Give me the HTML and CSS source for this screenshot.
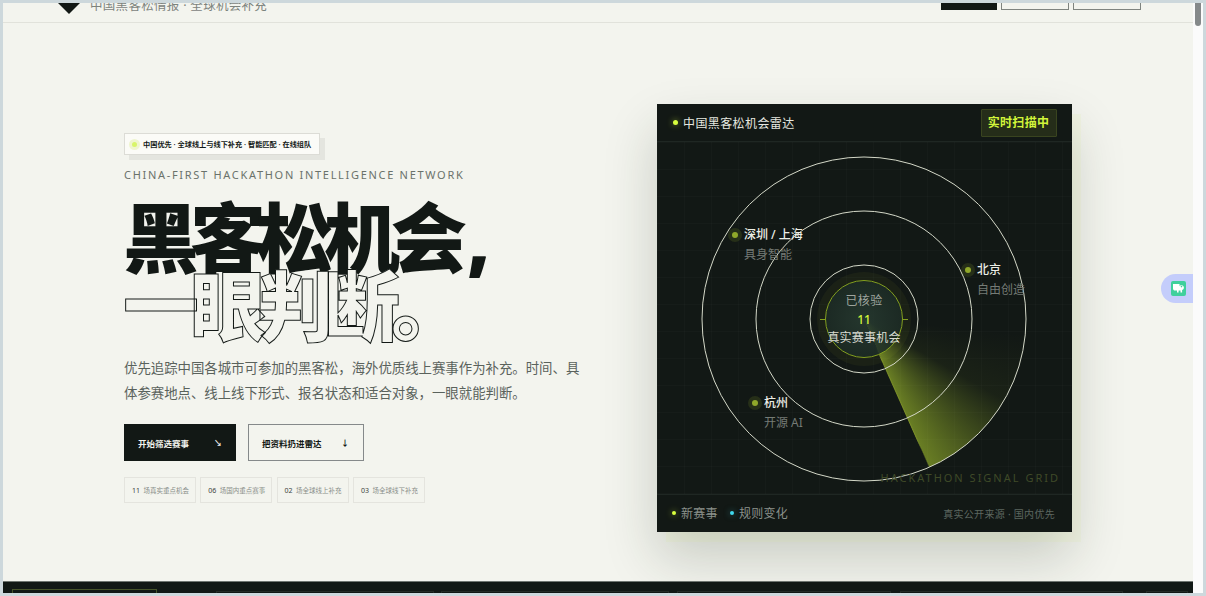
FILE: index.html
```html
<!DOCTYPE html>
<html lang="zh-CN">
<head>
    <meta charset="UTF-8">
    <meta name="viewport" content="width=device-width, initial-scale=1.0">
    <title>中国黑客松情报</title>
    <link rel="stylesheet" href="styles.css">
</head>
<body>
    <div class="window">
        <div class="page">
            <header class="topbar">
                <svg class="logo" viewBox="0 0 44 44" width="44" height="44">
                    <polygon points="22,0 44,22 22,44 0,22" fill="#121815"/>
                    <circle cx="22" cy="22" r="6" fill="#5f7a1c"/>
                </svg>
                <p class="brand-sub">中国黑客松情报 · 全球机会补充</p>
                <nav class="top-actions">
                    <a class="top-btn top-btn-dark"></a>
                    <a class="top-btn top-btn-wide"></a>
                    <a class="top-btn top-btn-wide"></a>
                </nav>
            </header>

            <main class="hero">
                <section class="intro">
                    <div class="tag"><i class="tag-dot"></i>中国优先 · 全球线上与线下补充 · 智能匹配 · 在线组队</div>
                    <p class="eyebrow">CHINA-FIRST HACKATHON INTELLIGENCE NETWORK</p>
                    <h1 class="headline">
                        <span class="line-solid">黑客松机会<i class="comma">,</i></span>
                        <span class="line-outline">一眼判断。</span>
                    </h1>
                    <p class="lead">优先追踪中国各城市可参加的黑客松，海外优质线上赛事作为补充。时间、具体参赛地点、线上线下形式、报名状态和适合对象，一眼就能判断。</p>
                    <div class="cta-row">
                        <a class="cta cta-dark"><span>开始筛选赛事</span><span class="cta-arrow">↘</span></a>
                        <a class="cta cta-light"><span>把资料扔进雷达</span><span class="cta-arrow">↓</span></a>
                    </div>
                    <ul class="stats">
                        <li><b>11</b>场真实重点机会</li>
                        <li><b>06</b>场国内重点赛事</li>
                        <li><b>02</b>场全球线上补充</li>
                        <li><b>03</b>场全球线下补充</li>
                    </ul>
                </section>

                <section class="panel">
                    <div class="panel-head">
                        <div class="panel-title"><i class="dot dot-lime"></i>中国黑客松机会雷达</div>
                        <div class="panel-badge">实时扫描中</div>
                    </div>
                    <div class="radar">
                        <div class="sweep"></div>
                        <div class="sweep-line"></div>
                        <div class="ring ring-outer"></div>
                        <div class="ring ring-mid"></div>
                        <div class="ring ring-inner"></div>
                        <div class="core">
                            <i class="tick tick-left"></i>
                            <i class="tick tick-right"></i>
                            <span class="core-label">已核验</span>
                            <span class="core-num">11</span>
                            <span class="core-text">真实赛事机会</span>
                        </div>
                        <div class="pin pin-sz"><i class="pin-dot"></i><div><b>深圳 / 上海</b><span>具身智能</span></div></div>
                        <div class="pin pin-bj"><i class="pin-dot"></i><div><b>北京</b><span>自由创造</span></div></div>
                        <div class="pin pin-hz"><i class="pin-dot"></i><div><b>杭州</b><span>开源 AI</span></div></div>
                        <div class="watermark">HACKATHON SIGNAL GRID</div>
                    </div>
                    <div class="panel-foot">
                        <div class="legend">
                            <span><i class="dot dot-small dot-lime"></i>新赛事</span>
                            <span><i class="dot dot-small dot-cyan"></i>规则变化</span>
                        </div>
                        <div class="source">真实公开来源 · 国内优先</div>
                    </div>
                </section>
            </main>

            <section class="ticker">
                <div class="ticker-box ticker-first"></div>
                <div class="ticker-box ticker-a"></div>
                <div class="ticker-box ticker-b"></div>
                <div class="ticker-box ticker-c"></div>
                <div class="ticker-box ticker-d"></div>
                <div class="ticker-box ticker-e"></div>
            </section>

            <div class="float-widget">
                <svg viewBox="0 0 15 15" width="15" height="15">
                    <rect width="15" height="15" rx="2" fill="#3fd09c"/>
                    <path d="M2 3h6.500v2.200c.6-1.300 3-1.500 4 0 .9 1.400.3 3.600-1.400 3.800v2.600H9.500v-2H7.600v2H6v-2H4C2.800 9.600 2 8.600 2 7.400z" fill="#fff"/>
                    <circle cx="10.500" cy="5.600" r=".8" fill="#3fd09c"/>
                </svg>
            </div>
        </div>
        <div class="scrollbar"><div class="scroll-thumb"></div></div>
    </div>
</body>
</html>
```

FILE: styles.css
```css
* {
    margin: 0;
    padding: 0;
    box-sizing: border-box;
}

html,
body {
    height: 100%;
    overflow: hidden;
}

body {
    background-color: #cdd8dc;
    padding: 3px;
    font-family: "Noto Sans", "Noto Sans CJK SC", sans-serif;
    color: #121815;
}

.window {
    display: flex;
    height: 100%;
}

.page {
    position: relative;
    flex: 1;
    display: flex;
    flex-direction: column;
    overflow: hidden;
    background-color: #f3f4ee;
}

.scrollbar {
    width: 10px;
    padding: 0 2px;
    background-color: #fbfbfb;
}

.scroll-thumb {
    height: 23px;
    border-radius: 0 0 3px 3px;
    background-color: #85898a;
}

/* top bar, page is scrolled a little so only its bottom shows */
.topbar {
    flex: none;
    display: flex;
    align-items: center;
    height: 61px;
    margin-top: -41px;
    padding: 0 52px 0 44px;
    border-bottom: 1px solid #e1e2db;
}

.logo {
    flex: none;
}

.brand-sub {
    align-self: flex-end;
    margin-left: -1px;
    padding-bottom: 9px;
    font-size: 12.500px;
    line-height: 14px;
    letter-spacing: 0.3px;
    color: #7d837d;
}

.top-actions {
    display: flex;
    gap: 4px;
    margin-left: auto;
}

.top-btn {
    display: block;
    width: 56px;
    height: 36px;
    border: 1px solid #7f847f;
}

.top-btn-dark {
    background-color: #121815;
    border-color: #121815;
}

.top-btn-wide {
    width: 68px;
}

/* hero */
.hero {
    flex: 1;
    display: grid;
    grid-template-columns: 1fr 415px;
    align-items: center;
    padding: 81px 121px 49px;
    min-height: 0;
}

.intro {
    display: flex;
    flex-direction: column;
    align-items: flex-start;
}

.tag {
    display: flex;
    align-items: center;
    height: 22px;
    padding: 0 8px 0 6px;
    border: 1px solid #dcdcd6;
    background-color: #fbfbf7;
    box-shadow: 5px 5px 0 #e4e5df;
    font-size: 7.200px;
    font-weight: 700;
    white-space: nowrap;
}

.tag-dot {
    width: 5px;
    height: 5px;
    margin: 0 6px 0 1px;
    border-radius: 50%;
    background-color: #d8f56a;
    box-shadow: 0 0 0 3px #eff5cf;
}

.eyebrow {
    margin-top: 12px;
    font-size: 11px;
    line-height: 16px;
    letter-spacing: 1.700px;
    color: #6a726b;
    white-space: nowrap;
}

.headline {
    margin-top: 21px;
    margin-left: -1px;
    font-size: 76px;
    font-weight: 900;
    line-height: 68px;
    letter-spacing: -9px;
    white-space: nowrap;
}

.headline span {
    display: block;
}

.line-solid {
    color: #121815;
}

.comma {
    margin-left: 9px;
    font-style: normal;
}

.line-outline {
    color: #f3f4ee;
    -webkit-text-stroke: 1px #121815;
}

.lead {
    width: 460px;
    margin-top: 16px;
    font-size: 13.400px;
    line-height: 25px;
    color: #5a625c;
}

.cta-row {
    display: flex;
    gap: 12px;
    margin-top: 18px;
}

.cta {
    display: flex;
    align-items: center;
    justify-content: space-between;
    height: 37px;
    padding: 0 14px;
    font-size: 8.500px;
    font-weight: 700;
}

.cta-dark {
    width: 112px;
    background-color: #121815;
    color: #f3f4ee;
}

.cta-light {
    width: 116px;
    padding-left: 13px;
    border: 1px solid #85898a;
}

.cta-arrow {
    font-size: 8px;
    font-weight: 700;
}

.stats {
    display: flex;
    gap: 4.300px;
    margin-top: 16px;
    list-style: none;
}

.stats li {
    display: flex;
    align-items: center;
    width: 72px;
    height: 26px;
    padding-left: 7px;
    border: 1px solid #e4e4de;
    font-size: 6.500px;
    color: #8a8f8a;
    white-space: nowrap;
}

.stats b {
    margin-right: 3.500px;
    font-size: 7px;
    font-weight: 400;
    color: #3b423d;
}

/* radar card */
.panel {
    display: flex;
    flex-direction: column;
    height: 428px;
    background-color: #121815;
    box-shadow: 9px 10px 0 rgba(215, 240, 130, 0.1), 0 26px 50px rgba(30, 45, 25, 0.2);
}

.panel-head {
    flex: none;
    display: flex;
    align-items: center;
    justify-content: space-between;
    height: 38px;
    padding: 0 15px 0 16px;
    border-bottom: 1px solid #1f2723;
}

.panel-title {
    display: flex;
    align-items: center;
    font-size: 12px;
    letter-spacing: 0.4px;
    color: #e6e8e0;
}

.dot {
    display: inline-block;
    width: 5px;
    height: 5px;
    margin-right: 6px;
    border-radius: 50%;
}

.panel-title .dot {
    margin-right: 5px;
}

.dot-small {
    width: 4px;
    height: 4px;
    margin-right: 5px;
}

.dot-lime {
    background-color: #d8ff3e;
    box-shadow: 0 0 6px rgba(216, 255, 62, 0.6);
}

.dot-cyan {
    background-color: #3fd8ee;
    box-shadow: 0 0 6px rgba(63, 216, 238, 0.5);
}

.panel-badge {
    width: 76px;
    height: 28px;
    padding-right: 1px;
    border: 1px solid #39441f;
    border-radius: 1px;
    background-color: #252d19;
    font-size: 12px;
    font-weight: 700;
    line-height: 26px;
    text-align: center;
    letter-spacing: 0.3px;
    color: #d2f53a;
}

.radar {
    position: relative;
    flex: 1;
    overflow: hidden;
    background-image:
        linear-gradient(rgba(255, 255, 255, 0.014) 1px, transparent 1px),
        linear-gradient(90deg, rgba(255, 255, 255, 0.014) 1px, transparent 1px);
    background-size: 27px 27px;
}

.ring,
.sweep,
.core {
    position: absolute;
    top: 177px;
    left: 207px;
    border-radius: 50%;
    transform: translate(-50%, -50%);
}

.ring {
    border: 1px solid #d4d8c8;
}

.ring-outer {
    width: 325px;
    height: 325px;
}

.ring-mid {
    width: 217px;
    height: 217px;
}

.ring-inner {
    width: 109px;
    height: 109px;
}

.sweep {
    width: 324px;
    height: 324px;
    background: conic-gradient(from 95deg, rgba(190, 225, 50, 0) 0deg, rgba(190, 225, 50, 0.05) 25deg, rgba(190, 225, 50, 0.5) 61deg, transparent 61.500deg);
}

.sweep-line {
    position: absolute;
    top: 177px;
    left: 206px;
    width: 1px;
    height: 143px;
    background: linear-gradient(rgba(125, 145, 40, 0) 20%, #7d9128 30%, #7d9128 92%, rgba(125, 145, 40, 0));
    transform-origin: top center;
    transform: rotate(-24deg);
}

.core {
    display: flex;
    flex-direction: column;
    align-items: center;
    justify-content: center;
    width: 78px;
    height: 78px;
    border: 1px solid #84a01f;
    background: radial-gradient(circle, rgba(40, 60, 50, 0.85), rgba(25, 38, 33, 0.85));
    box-shadow: 0 0 0 8px rgba(190, 225, 50, 0.05);
}

.tick {
    position: absolute;
    top: 50%;
    width: 5px;
    height: 1px;
    background-color: #84a01f;
}

.tick-left {
    left: -6px;
}

.tick-right {
    right: -6px;
}

.core-label {
    font-size: 12px;
    line-height: 20px;
    letter-spacing: 0.3px;
    color: #9fa59e;
    white-space: nowrap;
}

.core-num {
    font-size: 12px;
    line-height: 17px;
    font-weight: 500;
    color: #d2f53a;
}

.core-text {
    font-size: 12px;
    line-height: 20px;
    letter-spacing: 0.2px;
    color: #d9dcd2;
    white-space: nowrap;
}

.pin {
    position: absolute;
    display: flex;
    gap: 6px;
    align-items: flex-start;
}

.pin-sz {
    top: 83px;
    left: 75px;
}

.pin-bj {
    top: 118px;
    left: 308px;
}

.pin-hz {
    top: 251px;
    left: 95px;
}

.pin-dot {
    width: 6px;
    height: 6px;
    margin-top: 7px;
    border-radius: 50%;
    background-color: #90a82a;
    box-shadow: 0 0 0 4px rgba(144, 168, 42, 0.16);
}

.pin b {
    display: block;
    font-size: 12px;
    font-weight: 500;
    line-height: 20px;
    color: #eceee6;
    white-space: nowrap;
}

.pin span {
    display: block;
    font-size: 12px;
    line-height: 19px;
    color: #757b75;
    white-space: nowrap;
}

.watermark {
    position: absolute;
    right: 12px;
    bottom: 9px;
    font-size: 11px;
    letter-spacing: 2px;
    color: #3f4a28;
    white-space: nowrap;
}

.panel-foot {
    flex: none;
    display: flex;
    align-items: center;
    justify-content: space-between;
    height: 38px;
    padding: 0 17px 1px 15px;
    border-top: 1px solid #1f2723;
}

.legend {
    display: flex;
    gap: 12px;
    font-size: 12px;
    letter-spacing: 0.3px;
    color: #8b918b;
}

.legend span {
    display: flex;
    align-items: center;
}

.source {
    font-size: 10px;
    letter-spacing: 0.3px;
    color: #5d6760;
}

/* dark band just starting at the fold */
.ticker {
    flex: none;
    position: relative;
    display: flex;
    align-items: flex-start;
    height: 12px;
    padding-top: 9px;
    border-top: 1px solid #6e7570;
    background-color: #111815;
}

.ticker-box {
    height: 3px;
    border: 1px solid #232b26;
    border-bottom: 0;
}

.ticker-first {
    width: 145px;
    height: 5px;
    margin: -2px 0 0 9px;
    border-color: #46542a;
}

.ticker-a {
    width: 218px;
    margin-left: 59px;
}

.ticker-b {
    width: 228px;
    margin-left: 7px;
}

.ticker-c {
    width: 214px;
    margin-left: 8px;
}

.ticker-d {
    width: 223px;
    margin-left: 9px;
}

.ticker-e {
    width: 42px;
    margin-left: 23px;
}

.float-widget {
    position: absolute;
    top: 271px;
    right: 0;
    display: flex;
    align-items: center;
    width: 32px;
    height: 29px;
    padding-left: 10px;
    border-radius: 15px 0 0 15px;
    background-color: #c4cdfb;
}
```
